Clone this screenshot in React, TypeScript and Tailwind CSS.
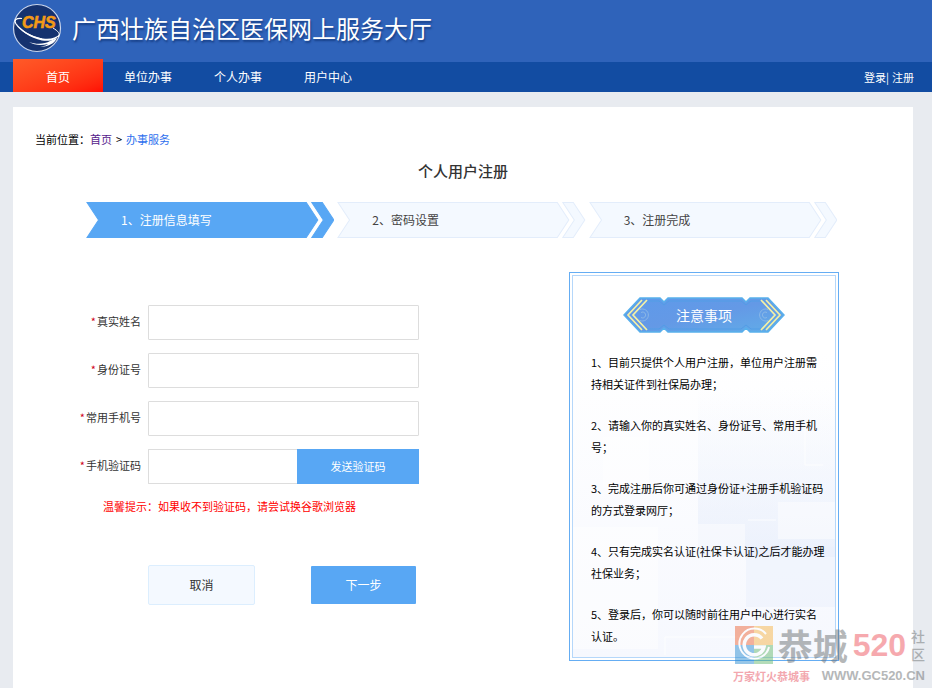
import React from 'react';

const NAV_ITEMS = ['单位办事', '个人办事', '用户中心'];

const STEPS = ['1、注册信息填写', '2、密码设置', '3、注册完成'];

const FIELDS = [
  { id: 'realName', label: '真实姓名' },
  { id: 'idNumber', label: '身份证号' },
  { id: 'mobile', label: '常用手机号' },
];

const NOTICES = [
  ['1、目前只提供个人用户注册，单位用户注册需', '持相关证件到社保局办理；'],
  ['2、请输入你的真实姓名、身份证号、常用手机', '号；'],
  ['3、完成注册后你可通过身份证+注册手机验证码', '的方式登录网厅；'],
  ['4、只有完成实名认证(社保卡认证)之后才能办理', '社保业务；'],
  ['5、登录后，你可以随时前往用户中心进行实名', '认证。'],
];

function Logo() {
  return (
    <svg viewBox="0 0 50 50" className="h-[50px] w-[50px] shrink-0" aria-hidden="true">
      <circle cx="25" cy="25" r="23.5" fill="#15326f" stroke="#c9d5ec" strokeWidth="1.2" />
      <path d="M10 15.500C4 15 1.500 17 4 21C8 27 18 34 30 36" fill="none" stroke="#fff" strokeWidth="1.200" />
      <path d="M4 20C10 28 20 34 31 35.500C38 36.500 44 35 48 31C45 37 38 38.500 30 37.500C18 35 8 28 4 20Z" fill="#fff" />
      <path d="M41 25C46 28 49 31 46 34" fill="none" stroke="#fff" strokeWidth="1" />
      <path d="M17 39C25 42 33 41 38 38L45 35C42 41 36 44 28 43.500C33 43 35 42 36 41C29 43 22 42 17 39Z" fill="#fff" />
      <text x="10" y="25" fill="#f39a17" stroke="#f39a17" strokeWidth="0.600" fontSize="16" fontWeight="bold" fontStyle="italic" fontFamily="Liberation Sans, sans-serif">
        CHS
      </text>
    </svg>
  );
}

function Step({ label, active }: { label: string; active: boolean }) {
  const fill = active ? '#58a7f4' : '#f4f9ff';
  const stroke = active ? '#58a7f4' : '#e3edfb';
  return (
    <li className="grid h-9 items-center" aria-current={active ? 'step' : undefined}>
      <svg viewBox="0 0 248 36" preserveAspectRatio="none" className="col-start-1 row-start-1 h-9 w-full" fill={fill} stroke={stroke} aria-hidden="true">
        <path d="M1 .5H220L231.500 18L220 35.500H1L12.500 18Z" />
        <path d="M225.500 .5H236L247.500 18L236 35.500H225.500L237 18Z" />
      </svg>
      <span className={active ? 'col-start-1 row-start-1 pl-[35px] text-white' : 'col-start-1 row-start-1 pl-[35px] text-[#444]'}>{label}</span>
    </li>
  );
}

function NoticeBanner() {
  return (
    <div className="mx-auto grid w-[162px] items-center text-center">
      <svg viewBox="0 0 162 36" className="col-start-1 row-start-1 h-9 w-full" aria-hidden="true">
        <defs>
          <linearGradient id="banner" x1="0" y1="0" x2="1" y2="1">
            <stop offset="0" stopColor="#5e9aea" />
            <stop offset=".5" stopColor="#6499e6" />
            <stop offset="1" stopColor="#61ade8" />
          </linearGradient>
        </defs>
        <path d="M1 18L17 1H37L41 5L45 1H119L123 5L127 1H145L161 18L145 35H127L123 31L119 35H45L41 31L37 35H17Z" fill="url(#banner)" stroke="#58b0ec" strokeWidth="1.500" />
        <path d="M18 4H36L41 8L46 4H118L123 8L128 4H144M18 32H36L41 28L46 32H118L123 28L128 32H144" fill="none" stroke="#529de6" />
        <g fill="none" stroke="#93bde6" strokeWidth=".8">
          <path d="M17 12.500A6 6 0 1 1 17 23.500M18 15.500A3 3 0 1 1 18 20.500" />
          <path d="M145 12.500A6 6 0 1 0 145 23.500M144 15.500A3 3 0 1 0 144 20.500" />
        </g>
        <g fill="none" stroke="#f5f1a4" strokeWidth="1.700">
          <path d="M19 3L5 18L19 33M24 3L10 18L24 33" />
          <path d="M143 3L157 18L143 33M138 3L152 18L138 33" />
        </g>
      </svg>
      <h2 className="col-start-1 row-start-1 text-[14px] text-white">注意事项</h2>
    </div>
  );
}

function NoticePanel() {
  return (
    <aside className="w-[270px] shrink-0 border border-[#65adf3] p-[2px]">
      <div className="relative h-full border border-[#b5d7fa] bg-linear-to-b from-white from-20% to-[#f6f8fe] px-[18px] pt-[21px] pb-[10px]">
        <svg viewBox="0 0 262 290" preserveAspectRatio="none" className="absolute inset-x-0 bottom-0 h-[290px] w-full" aria-hidden="true">
          <defs>
            <linearGradient id="tiles" x1="0" y1="0" x2="0" y2="1">
              <stop offset="0" stopColor="#eaf0fc" stopOpacity="0" />
              <stop offset="1" stopColor="#e6edfb" stopOpacity=".7" />
            </linearGradient>
          </defs>
          <path d="M125 20H262V190H125Z" fill="url(#tiles)" />
          <path d="M173 180H262V240H173Z" fill="#e9effc" opacity=".5" />
          <path d="M205 135H262V172H205ZM0 160H85V282H0ZM125 157H172V190H125ZM30 70H76V120H30Z" fill="#fff" opacity=".45" />
          <path d="M92 288V270H173M175 153H203M232 60V98H250" fill="none" stroke="#fff" strokeWidth="1" opacity=".8" />
        </svg>
        <div className="relative">
          <NoticeBanner />
          <ol className="mt-[18px] flex flex-col gap-[19px] leading-[22px] text-black">
            {NOTICES.map(([first, rest]) => (
              <li key={first} className="whitespace-nowrap">
                {first}
                <br />
                {rest}
              </li>
            ))}
          </ol>
        </div>
      </div>
    </aside>
  );
}

function CommunityMark() {
  return (
    <div className="pointer-events-none absolute right-[7px] bottom-[4px] flex w-[192px] flex-col gap-[3px] opacity-50">
      <div className="flex h-[40px] items-center justify-between pl-[2px]">
        <svg viewBox="0 0 38 38" className="h-[38px] w-[38px] shrink-0" aria-hidden="true">
          <path d="M0 0H19V19H0Z" fill="#ef6a3c" />
          <path d="M19 0H38V19H19Z" fill="#f7b64a" />
          <path d="M0 19H19V38H0Z" fill="#2f8fd3" />
          <path d="M19 19H38V38H19Z" fill="#6cbb73" />
          <path d="M31 8A15 15 0 1 0 34 21" fill="none" stroke="#fff" strokeWidth="2" />
          <path d="M27 12.500A10 10 0 1 0 29 21H19" fill="none" stroke="#fff" strokeWidth="3.500" />
        </svg>
        <span className="text-[35px] leading-[40px] font-bold text-[#6d7274]">恭城</span>
        <span className="font-['Liberation_Sans',sans-serif] text-[32px] leading-[40px] font-bold text-[#ee5560]">520</span>
        <span className="w-[14px] text-[14px] leading-[18px] font-medium text-[#6d7274]">社区</span>
      </div>
      <div className="flex items-center justify-between leading-[16px] font-bold">
        <span className="text-[11px] text-[#e8515f]">万家灯火恭城事</span>
        <span className="font-['Liberation_Sans',sans-serif] text-[13px] text-[#6d7274]">WWW.GC520.CN</span>
      </div>
    </div>
  );
}

export default function App() {
  return (
    <div className="relative flex min-h-screen flex-col overflow-hidden bg-[#e8ebf0] font-['Noto_Sans_CJK_SC',sans-serif] text-[11px] text-[#333]">
      <header>
        <div className="flex h-[62px] items-center gap-[10px] bg-[#2f63ba] pb-[6px] pl-3">
          <Logo />
          <h1 className="text-[24px] whitespace-nowrap text-white [text-shadow:1px_2px_2px_#173f86]">广西壮族自治区医保网上服务大厅</h1>
        </div>
        <nav className="flex h-[30px] items-end bg-[#124ca2] pr-[18px] pl-[13px] text-[12px] text-white">
          <a href="#home" className="flex h-[33px] w-[90px] items-center justify-center bg-linear-to-br from-[#ff5a28] to-[#ff0a04] pt-[2px]">
            首页
          </a>
          {NAV_ITEMS.map((item) => (
            <a key={item} href="#nav" className="flex h-[30px] w-[90px] items-center justify-center">
              {item}
            </a>
          ))}
          <div className="ml-auto flex h-[30px] items-center text-[11px]">
            <a href="#login">登录</a>
            <span>|</span>
            <a href="#register" className="ml-[3px]">
              注册
            </a>
          </div>
        </nav>
      </header>

      <main className="mt-[15px] mr-[19px] ml-[13px] flex-1 bg-white pt-[21px] pb-[27px]">
        <div className="flex gap-1 pl-[22px] leading-[22px] text-black">
          <div className="flex">
            <span>当前位置：</span>
            <a href="#home" className="text-[#551a8b]">
              首页
            </a>
          </div>
          <span>&gt;</span>
          <a href="#service" className="text-[#2e6fee]">
            办事服务
          </a>
        </div>
        <h2 className="mt-[10px] text-center text-[15px] leading-[22px] font-medium text-[#333]">个人用户注册</h2>

        <ol className="mt-5 mr-[76px] ml-[73px] grid grid-cols-3 gap-[3px] text-[12px]">
          {STEPS.map((step, index) => (
            <Step key={step} label={step} active={index === 0} />
          ))}
        </ol>

        <div className="mt-[34px] mr-[74px] ml-[60px] flex items-start justify-between">
          <form className="w-[346px] pt-[33px]" onSubmit={(event) => event.preventDefault()}>
            <div className="flex flex-col gap-[13px]">
              {FIELDS.map((field) => (
                <div key={field.id} className="flex gap-[7px]">
                  <label htmlFor={field.id} className="w-[68px] text-right leading-[32px] whitespace-nowrap">
                    <span className="mr-px text-[#d0021b]">*</span>
                    {field.label}
                  </label>
                  <input id={field.id} type="text" className="h-[35px] min-w-0 flex-1 rounded-[1px] border border-[#ddd] px-2 outline-none" />
                </div>
              ))}
              <div className="flex gap-[7px]">
                <label htmlFor="code" className="w-[68px] text-right leading-[32px] whitespace-nowrap">
                  <span className="mr-px text-[#d0021b]">*</span>
                  手机验证码
                </label>
                <div className="flex min-w-0 flex-1">
                  <input id="code" type="text" className="h-[35px] min-w-0 flex-1 rounded-l-[1px] border border-r-0 border-[#ddd] px-2 outline-none" />
                  <button type="button" className="h-[35px] w-[122px] bg-[#58a7f4] text-white">
                    发送验证码
                  </button>
                </div>
              </div>
            </div>
            <p className="mt-[11px] pl-[30px] leading-[22px] whitespace-nowrap text-[#f00]">温馨提示：如果收不到验证码，请尝试换谷歌浏览器</p>
            <div className="mt-[48px] flex items-center gap-[56px] pl-[75px] text-[12px]">
              <button type="button" className="h-10 w-[107px] rounded-[2px] border border-[#dceefe] bg-[#f4f9ff] text-[#333]">
                取消
              </button>
              <button type="submit" className="h-[38px] w-[105px] rounded-[1px] bg-[#58a7f4] text-white">
                下一步
              </button>
            </div>
          </form>
          <NoticePanel />
        </div>
      </main>
      <CommunityMark />
    </div>
  );
}
